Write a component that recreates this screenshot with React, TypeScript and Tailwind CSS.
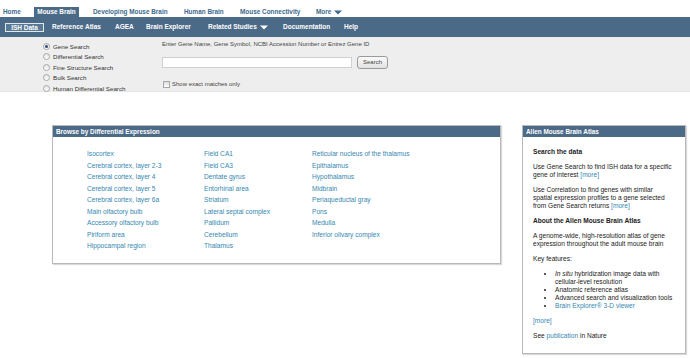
const topNav = [
  { label: "Home", w: "w-[31px]" },
  { label: "Mouse Brain", w: "w-[45px]", active: true },
  { label: "Developing Mouse Brain", w: "w-[91px]", ml: true },
  { label: "Human Brain", w: "w-[56px]" },
  { label: "Mouse Connectivity", w: "w-[76px]" },
];

const subNav = [
  { label: "Reference Atlas", w: "w-[63px]" },
  { label: "AGEA", w: "w-[31px]" },
  { label: "Brain Explorer", w: "w-[62px]" },
  { label: "Related Studies", w: "w-[75px]", arrow: true },
  { label: "Documentation", w: "w-[61px]" },
  { label: "Help", w: "w-[30px]" },
];

const searchTypes = [
  "Gene Search",
  "Differential Search",
  "Fine Structure Search",
  "Bulk Search",
  "Human Differential Search",
];

const columns = [
  [
    "Isocortex",
    "Cerebral cortex, layer 2-3",
    "Cerebral cortex, layer 4",
    "Cerebral cortex, layer 5",
    "Cerebral cortex, layer 6a",
    "Main olfactory bulb",
    "Accessory olfactory bulb",
    "Piriform area",
    "Hippocampal region",
  ],
  [
    "Field CA1",
    "Field CA3",
    "Dentate gyrus",
    "Entorhinal area",
    "Striatum",
    "Lateral septal complex",
    "Pallidum",
    "Cerebellum",
    "Thalamus",
  ],
  [
    "Reticular nucleus of the thalamus",
    "Epithalamus",
    "Hypothalamus",
    "Midbrain",
    "Periaqueductal gray",
    "Pons",
    "Medulla",
    "Inferior olivary complex",
  ],
];

function Caret({ color }: { color: string }) {
  return (
    <svg width="8" height="5" viewBox="0 0 8 5" className="ml-[3px]">
      <path d="M0 0.5 L8 0.5 L4 4.5 Z" fill={color} />
    </svg>
  );
}

function Radio({ checked }: { checked?: boolean }) {
  return (
    <span className="w-[7px] h-[7px] rounded-full border border-[#a8a8a8] bg-gradient-to-b from-[#e4e4e4] to-white flex items-center justify-center">
      {checked && <span className="w-[3px] h-[3px] rounded-full bg-[#2c4f73]" />}
    </span>
  );
}

function PanelHeader({ title }: { title: string }) {
  return (
    <div className="h-[11px] bg-[#4b6a87] text-white font-bold text-[6.4px] leading-[11px] pl-[3px]">
      {title}
    </div>
  );
}

export default function App() {
  return (
    <div className="w-[690px] h-[358px] overflow-hidden bg-white font-['Liberation_Sans',Arial,sans-serif]">
      {/* top nav */}
      <div className="h-[17px] flex items-end pl-[3px] text-[6.4px] font-bold text-[#3c6a8c]">
        {topNav.map((n) => (
          <div
            key={n.label}
            className={`${n.w} ${n.ml ? "ml-[14px]" : ""} h-[10px] leading-[10px] ${
              n.active ? "bg-[#4b6a87] text-white text-center" : ""
            }`}
          >
            {n.label}
          </div>
        ))}
        <div className="h-[10px] flex items-center">
          More
          <Caret color="#3c6a8c" />
        </div>
      </div>

      {/* sub nav */}
      <div className="h-[20px] bg-[#4b6a87] flex items-center pl-[5px] text-[6.5px] font-bold text-white">
        <div className="w-[39px] h-[9px] border border-[#dfe6ec] bg-[#587894] leading-[7px] text-center">
          ISH Data
        </div>
        <div className="ml-[8px] flex items-center">
          {subNav.map((n) => (
            <div key={n.label} className={`${n.w} flex items-center`}>
              {n.label}
              {n.arrow && <Caret color="#ffffff" />}
            </div>
          ))}
        </div>
      </div>

      {/* search area */}
      <div className="h-[55px] bg-[#eeeeee] border-b border-[#e6e6e6] flex text-[6.2px] text-[#333]">
        <div className="pl-[43px] pt-[4px] w-[162px]">
          {searchTypes.map((s, i) => (
            <div key={s} className="h-[10.5px] flex items-center">
              <Radio checked={i === 0} />
              <span className="ml-[3px]">{s}</span>
            </div>
          ))}
        </div>
        <div className="pt-[4px] text-[6px]">
          <div className="h-[7px] leading-[7px] text-[#444]">
            Enter Gene Name, Gene Symbol, NCBI Accession Number or Entrez Gene ID
          </div>
          <div className="mt-[8px] flex items-center">
            <div className="w-[190px] h-[11px] bg-white border border-[#d0d0d0]" />
            <button className="ml-[5px] w-[31px] h-[13px] rounded-[3px] border border-[#9a9a9a] bg-gradient-to-b from-[#fafafa] to-[#e2e2e2] text-[6px] text-[#444] leading-[11px]">
              Search
            </button>
          </div>
          <div className="mt-[11px] flex items-center pl-[1px]">
            <span className="w-[7px] h-[7px] border border-[#a8a8a8] bg-gradient-to-b from-[#dcdcdc] to-white" />
            <span className="ml-[2px] text-[#444]">Show exact matches only</span>
          </div>
        </div>
      </div>

      {/* main */}
      <div className="flex items-start pt-[33px]">
        <div className="ml-[52px] w-[449px] border border-[#b9b9b9] shadow-[1px_1px_1px_rgba(0,0,0,0.15)]">
          <PanelHeader title="Browse by Differential Expression" />
          <div className="flex pl-[34px] pt-[11px] pb-[11px] text-[6.6px] text-[#3587b0] leading-[11.5px]">
            {columns.map((col, ci) => (
              <div key={ci} className={ci === 0 ? "w-[117px]" : ci === 1 ? "w-[108px]" : ""}>
                {col.map((c) => (
                  <div key={c}>{c}</div>
                ))}
              </div>
            ))}
          </div>
        </div>

        <div className="ml-[21px] w-[164px] h-[229px] border border-[#b9b9b9] shadow-[1px_1px_1px_rgba(0,0,0,0.15)]">
          <PanelHeader title="Allen Mouse Brain Atlas" />
          <div className="pl-[10px] pt-[11px] text-[6.6px] leading-[8px] text-[#222] whitespace-nowrap">
            <p className="font-bold">Search the data</p>
            <p className="mt-[7px]">
              Use Gene Search to find ISH data for a specific
              <br />
              gene of interest <span className="text-[#3587b0]">[more]</span>
            </p>
            <p className="mt-[7px]">
              Use Correlation to find genes with similar
              <br />
              spatial expression profiles to a gene selected
              <br />
              from Gene Search returns <span className="text-[#3587b0]">[more]</span>
            </p>
            <p className="mt-[7px] font-bold">About the Allen Mouse Brain Atlas</p>
            <p className="mt-[7px]">
              A genome-wide, high-resolution atlas of gene
              <br />
              expression throughout the adult mouse brain
            </p>
            <p className="mt-[7px]">Key features:</p>
            <ul className="mt-[7px] pl-[22px] list-disc">
              <li>
                <i>In situ</i> hybridization image data with
                <br />
                cellular-level resolution
              </li>
              <li>Anatomic reference atlas</li>
              <li>Advanced search and visualization tools</li>
              <li className="text-[#3587b0] marker:text-[#222]">Brain Explorer® 3-D viewer</li>
            </ul>
            <p className="mt-[7px] text-[#3587b0]">[more]</p>
            <p className="mt-[7px]">
              See <span className="text-[#3587b0]">publication</span> in Nature
            </p>
          </div>
        </div>
      </div>
    </div>
  );
}
